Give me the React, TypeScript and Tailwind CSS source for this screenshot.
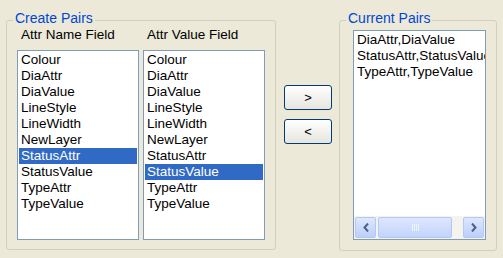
const fields = [
  'Colour',
  'DiaAttr',
  'DiaValue',
  'LineStyle',
  'LineWidth',
  'NewLayer',
  'StatusAttr',
  'StatusValue',
  'TypeAttr',
  'TypeValue',
];

const pairs = ['DiaAttr,DiaValue', 'StatusAttr,StatusValue', 'TypeAttr,TypeValue'];

const ListBox = ({ items, selected }: { items: string[]; selected: string }) => (
  <div className="w-[122px] h-[190px] bg-white border border-[#7F9DB9] p-[1px] overflow-hidden">
    {items.map((item) => (
      <div
        key={item}
        className={
          item === selected
            ? 'h-[16px] leading-[16px] pl-[2px] bg-[#316AC5] text-white whitespace-nowrap'
            : 'h-[16px] leading-[16px] pl-[2px] text-black whitespace-nowrap'
        }
      >
        {item}
      </div>
    ))}
  </div>
);

const Chevron = ({ dir }: { dir: 'left' | 'right' }) => (
  <svg width="6" height="9" viewBox="0 0 6 9">
    <path
      d={dir === 'left' ? 'M5 0.5 L1.5 4.5 L5 8.5' : 'M1 0.5 L4.5 4.5 L1 8.5'}
      fill="none"
      stroke="#4D6185"
      strokeWidth="2"
    />
  </svg>
);

const ScrollButton = ({ dir }: { dir: 'left' | 'right' }) => (
  <div className="w-[21px] h-full flex items-center justify-center rounded-[2px] border border-[#B4C8F6] bg-gradient-to-b from-[#DDE7FE] to-[#BCCEFA]">
    <Chevron dir={dir} />
  </div>
);

const GroupBox = ({
  title,
  className,
  children,
}: {
  title: string;
  className: string;
  children: React.ReactNode;
}) => (
  <div className={`relative border border-[#D0D0BF] rounded-[3px] ${className}`}>
    <div className="absolute left-[6px] top-[-10px] px-[2px] leading-[15px] text-[14px] bg-[#ECE9D8] text-[#0046D5]">
      {title}
    </div>
    {children}
  </div>
);

const PushButton = ({ label }: { label: string }) => (
  <button className="w-[48px] h-[25px] flex items-center justify-center rounded-[3px] border border-[#003C74] bg-gradient-to-b from-white to-[#E6E5DE] text-black text-[13px]">
    {label}
  </button>
);

export default function App() {
  return (
    <div
      className="w-[503px] h-[258px] bg-[#ECE9D8] flex items-start pl-[6px] pt-[20px] text-[13.5px] text-black"
      style={{ fontFamily: '"Liberation Sans", Arial, sans-serif' }}
    >
      {/* Create Pairs */}
      <GroupBox title="Create Pairs" className="w-[270px] h-[230px] pt-[6px] px-[10px]">
        <div className="flex gap-[4px]">
          <div>
            <div className="leading-[16px] pl-[4px] mb-[7px]">Attr Name Field</div>
            <ListBox items={fields} selected="StatusAttr" />
          </div>
          <div>
            <div className="leading-[16px] pl-[4px] mb-[7px]">Attr Value Field</div>
            <ListBox items={fields} selected="StatusValue" />
          </div>
        </div>
      </GroupBox>

      {/* Move buttons */}
      <div className="ml-[8px] mr-[7px] mt-[65px] flex flex-col gap-[9px]">
        <PushButton label=">" />
        <PushButton label="<" />
      </div>

      {/* Current Pairs */}
      <GroupBox title="Current Pairs" className="w-[158px] h-[231px] pt-[9px] pl-[13px] pr-[10px]">
        <div className="w-[133px] h-[210px] bg-white border border-[#7F9DB9] flex flex-col">
          <div className="flex-1 p-[1px] overflow-hidden">
            {pairs.map((p) => (
              <div key={p} className="h-[16px] leading-[16px] pl-[2px] whitespace-nowrap">
                {p}
              </div>
            ))}
          </div>
          <div className="h-[23px] px-[1px] py-[1px] flex gap-[2px] bg-[#F4F3EE]">
            <ScrollButton dir="left" />
            <div className="w-[74px] h-full flex items-center justify-center gap-[1px] rounded-[2px] border border-[#B4C8F6] bg-gradient-to-b from-[#DDE7FE] to-[#C3D3FB]">
              <span className="w-[1px] h-[7px] bg-[#EEF4FE]" />
              <span className="w-[1px] h-[7px] bg-[#EEF4FE]" />
              <span className="w-[1px] h-[7px] bg-[#EEF4FE]" />
              <span className="w-[1px] h-[7px] bg-[#EEF4FE]" />
            </div>
            <div className="flex-1" />
            <ScrollButton dir="right" />
          </div>
        </div>
      </GroupBox>
    </div>
  );
}
